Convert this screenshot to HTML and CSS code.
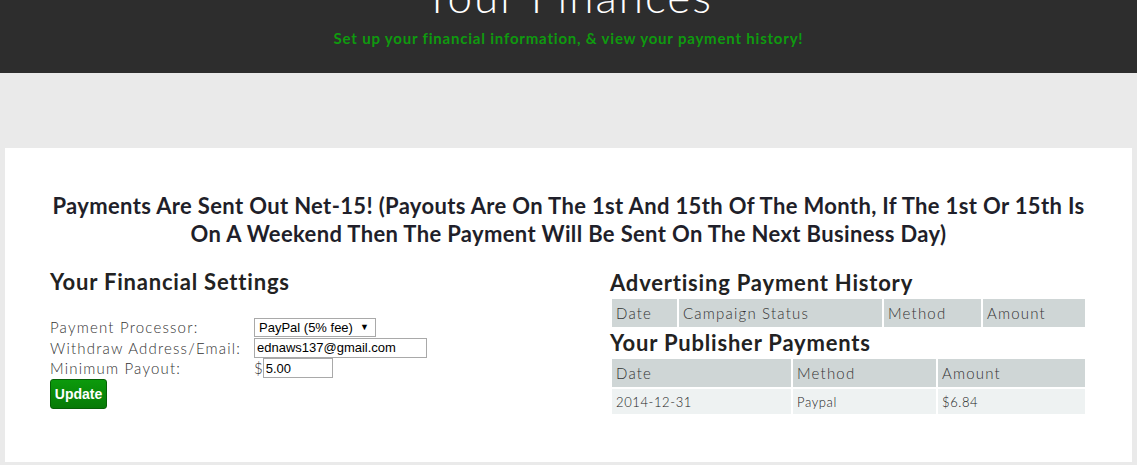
FILE: index.html
```html
<!DOCTYPE html>
<html lang="en">
<head>
    <title>Your Finances</title>
    <meta charset="UTF-8">
    <link rel="stylesheet" href="styles.css">
</head>
<body>
    <header class="page-header">
        <h1>Your Finances</h1>
        <p class="tagline">Set up your financial information, &amp; view your payment history!</p>
    </header>

    <div class="spacer"></div>

    <div class="panel">
        <h2 class="notice">Payments Are Sent Out Net-15! (Payouts Are On The 1st And 15th Of The Month, If The 1st Or 15th Is<br>On A Weekend Then The Payment Will Be Sent On The Next Business Day)</h2>

        <div class="columns">
            <div class="col">
                <h3>Your Financial Settings</h3>
                <form class="settings">
                    <div class="row">
                        <label>Payment Processor:</label>
                        <span class="select"><span>PayPal (5% fee)</span><span class="arrow">&#9660;</span></span>
                    </div>
                    <div class="row">
                        <label>Withdraw Address/Email:</label>
                        <input type="text" class="email" value="ednaws137@gmail.com">
                    </div>
                    <div class="row">
                        <label>Minimum Payout:</label>
                        <span class="dollar">$</span><input type="text" class="payout" value="5.00">
                    </div>
                    <button type="button" class="btn-update">Update</button>
                </form>
            </div>

            <div class="col history-col">
                <h3>Advertising Payment History</h3>
                <table class="history ads">
                    <tr>
                        <th class="c-date">Date</th>
                        <th class="c-status">Campaign Status</th>
                        <th class="c-method">Method</th>
                        <th>Amount</th>
                    </tr>
                </table>

                <h3>Your Publisher Payments</h3>
                <table class="history pubs">
                    <tr>
                        <th class="c-date">Date</th>
                        <th class="c-method">Method</th>
                        <th>Amount</th>
                    </tr>
                    <tr>
                        <td>2014-12-31</td>
                        <td>Paypal</td>
                        <td>$6.84</td>
                    </tr>
                </table>
            </div>
        </div>
    </div>
</body>
</html>
```

FILE: styles.css
```css
* {
    margin: 0;
    padding: 0;
    box-sizing: border-box;
}

body {
    font-family: Lato, "Open Sans", sans-serif;
    background-color: #eaeaea;
    color: #222;
    height: 465px;
    overflow: hidden;
}

.page-header {
    background-color: #2d2d2d;
    height: 73px;
    text-align: center;
    overflow: hidden;
}

.page-header h1 {
    color: #fff;
    font-weight: 300;
    font-size: 44px;
    line-height: 46px;
    margin-top: -27px;
    letter-spacing: 2px;
}

.tagline {
    color: #0f9a0f;
    font-weight: bold;
    font-size: 15px;
    letter-spacing: 0.8px;
    margin-top: 10px;
}

.spacer {
    height: 75px;
}

.panel {
    background-color: #fff;
    margin: 0 5px;
    padding: 44px 45px 40px;
    height: 314px;
}

.notice {
    text-align: center;
    font-size: 22px;
    font-weight: bold;
    line-height: 28px;
    letter-spacing: 0.35px;
    white-space: nowrap;
    color: #1f1f2a;
}

.columns {
    display: flex;
    margin-top: 20px;
}

.col {
    flex: 0 0 560px;
}

.col + .col {
    flex: 1;
}

h3 {
    font-size: 22px;
    font-weight: bold;
    line-height: 28px;
    letter-spacing: 0.8px;
    color: #222;
}

.settings {
    margin-top: 21px;
    font-size: 15px;
    font-weight: 300;
    letter-spacing: 1.2px;
    color: #333;
}

.row {
    display: flex;
    align-items: center;
    height: 20.5px;
}

.row label {
    width: 204px;
}

.select {
    display: flex;
    justify-content: space-between;
    align-items: center;
    border: 1px solid #a9a9a9;
    font-family: "Liberation Sans", Arial, sans-serif;
    font-size: 13px;
    font-weight: normal;
    letter-spacing: 0;
    padding: 0 6px 0 4px;
    height: 19px;
    width: 122px;
    color: #000;
}

.arrow {
    font-size: 9px;
}

input {
    font-family: "Liberation Sans", Arial, sans-serif;
    font-size: 13px;
    letter-spacing: 0;
    border: 1px solid #a9a9a9;
    height: 20px;
    padding: 0 2px;
    color: #000;
}

.email {
    width: 173px;
}

.dollar {
    font-size: 15px;
    letter-spacing: 0;
}

.payout {
    width: 70px;
}

.btn-update {
    margin-top: 0;
    background: linear-gradient(#0c9a0c, #077a07);
    border: 1px solid #066006;
    border-radius: 3px;
    color: #fff;
    font-family: "Liberation Sans", Arial, sans-serif;
    font-weight: bold;
    font-size: 14px;
    letter-spacing: 0;
    width: 57px;
    height: 30px;
}

.history-col {
    padding-top: 1px;
}

.history {
    border-spacing: 2px;
    width: 477px;
    font-size: 15px;
    font-weight: 300;
    letter-spacing: 1.2px;
    color: #333;
    margin: 0 0 0 0;
}

.history th,
.history td {
    text-align: left;
    font-weight: 300;
    padding: 0 4px;
    height: 28px;
}

.history th {
    background-color: #cfd6d6;
}

.history td {
    background-color: #eef2f2;
    height: 25px;
    font-size: 13px;
    letter-spacing: 0.6px;
    color: #222;
}

.ads .c-date { width: 65px; }
.ads .c-status { width: 203px; }
.ads .c-method { width: 97px; }

.pubs .c-date { width: 179px; }
.pubs .c-method { width: 143px; }
```
